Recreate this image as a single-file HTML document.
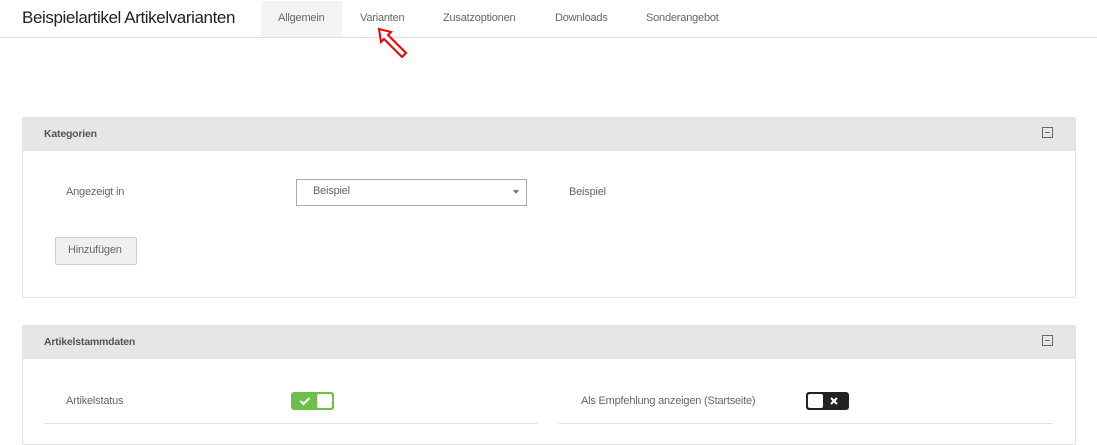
<!DOCTYPE html>
<html><head><meta charset="utf-8"><style>
*{box-sizing:border-box;margin:0;padding:0}
body{width:1097px;height:429px;overflow:hidden;background:#fff;font-family:"Liberation Sans",sans-serif;position:relative;color:#555}
.abs{position:absolute}
.t{font-size:11px;color:#666;letter-spacing:-0.2px}
.panel{position:absolute;left:22px;width:1054px;border:1px solid #e2e2e2;border-radius:2px}
.ph{height:33px;background:#e6e6e6;font-size:10.5px;font-weight:bold;color:#555;padding:10px 0 0 21px;position:relative;letter-spacing:-0.2px}
.ph .m{position:absolute;right:22px;top:9px;width:11px;height:11px;border:1px solid #666}
.ph .m:after{content:"";position:absolute;left:2px;right:2px;top:4px;height:1px;background:#666}
</style></head><body>
<div class="abs" style="left:22px;top:8px;font-size:17px;color:#222;letter-spacing:-0.4px">Beispielartikel Artikelvarianten</div>
<div class="abs" style="left:261px;top:1px;width:81px;height:36px;background:#f3f3f3"></div>
<div class="abs t" style="left:278px;top:12px">Allgemein</div>
<div class="abs t" style="left:360px;top:12px">Varianten</div>
<div class="abs t" style="left:443px;top:12px">Zusatzoptionen</div>
<div class="abs t" style="left:555px;top:12px">Downloads</div>
<div class="abs t" style="left:646px;top:12px">Sonderangebot</div>
<div class="abs" style="left:0;top:37px;width:1097px;height:1px;background:#e0e0e0"></div>
<svg class="abs" style="left:376px;top:26px" width="34" height="32"><path d="M3 3 L15 6 L12 9 L30 27 L26 31 L8 13 L5 16 Z" fill="#fff" stroke="#e00" stroke-width="2" stroke-linejoin="miter"/></svg>
<div class="panel" style="top:117px;height:181px">
<div class="ph">Kategorien<span class="m"></span></div>
</div>
<div class="abs t" style="left:66px;top:186px">Angezeigt in</div>
<div class="abs" style="left:296px;top:179px;width:231px;height:27px;border:1px solid #aaa"></div>
<div class="abs t" style="left:313px;top:185px">Beispiel</div>
<div class="abs" style="left:513px;top:190px;border:3px solid transparent;border-top:4px solid #777"></div>
<div class="abs t" style="left:569px;top:186px">Beispiel</div>
<div class="abs" style="left:55px;top:237px;width:82px;height:28px;background:#f0f0f0;border:1px solid #ccc;border-radius:2px"></div>
<div class="abs t" style="left:68px;top:244px">Hinzufügen</div>
<div class="panel" style="top:325px;height:120px">
<div class="ph">Artikelstammdaten<span class="m"></span></div>
</div>
<div class="abs t" style="left:66px;top:395px">Artikelstatus</div>
<div class="abs" style="left:291px;top:392px;width:43px;height:18px;background:#6cc04a;border-radius:3px"></div>
<div class="abs" style="left:317px;top:394px;width:15px;height:14px;background:#fff;border-radius:2px"></div>
<svg class="abs" style="left:299px;top:396px" width="12" height="10"><path d="M1.5 5 L4.5 8 L10.5 2" fill="none" stroke="#fff" stroke-width="2.2"/></svg>
<div class="abs t" style="left:581px;top:395px">Als Empfehlung anzeigen (Startseite)</div>
<div class="abs" style="left:806px;top:392px;width:43px;height:18px;background:#222;border-radius:3px"></div>
<div class="abs" style="left:808px;top:394px;width:15px;height:14px;background:#fff;border-radius:2px"></div>
<svg class="abs" style="left:830px;top:397px" width="8" height="8"><path d="M1 1 L7 7 M7 1 L1 7" stroke="#fff" stroke-width="2"/></svg>
<div class="abs" style="left:44px;top:423px;width:494px;height:1px;background:#e0e0e0"></div>
<div class="abs" style="left:559px;top:423px;width:494px;height:1px;background:#e0e0e0"></div>
</body></html>
